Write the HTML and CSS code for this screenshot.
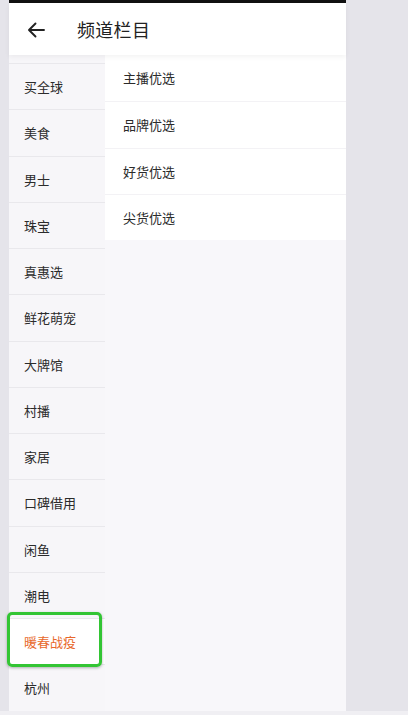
FILE: index.html
```html
<!DOCTYPE html>
<html lang="zh-CN">
<head>
<meta charset="utf-8">
<title>频道栏目</title>
<link rel="stylesheet" href="styles.css">
</head>
<body>
<div class="phone">
  <div class="statusbar"></div>
  <header class="header">
    <svg class="back" width="18" height="16" viewBox="0 0 18 16" aria-hidden="true">
      <path d="M17 8H2.5M8.5 1.5L2 8l6.5 6.5" fill="none" stroke="#222" stroke-width="1.9" stroke-linecap="round" stroke-linejoin="round"/>
    </svg>
    <h1 class="title">频道栏目</h1>
  </header>
  <div class="main">
    <ul class="sidebar">
      <li class="side-item">买全球</li>
      <li class="side-item">美食</li>
      <li class="side-item">男士</li>
      <li class="side-item">珠宝</li>
      <li class="side-item">真惠选</li>
      <li class="side-item">鲜花萌宠</li>
      <li class="side-item">大牌馆</li>
      <li class="side-item">村播</li>
      <li class="side-item">家居</li>
      <li class="side-item">口碑借用</li>
      <li class="side-item">闲鱼</li>
      <li class="side-item">潮电</li>
      <li class="side-item active">暖春战疫<span class="highlight"></span></li>
      <li class="side-item">杭州</li>
    </ul>
    <ul class="content">
      <li class="content-item">主播优选</li>
      <li class="content-item">品牌优选</li>
      <li class="content-item">好货优选</li>
      <li class="content-item">尖货优选</li>
    </ul>
  </div>
</div>
<div class="bottom-strip"></div>
</body>
</html>
```

FILE: styles.css
```css
* { box-sizing: border-box; }
html, body {
  margin: 0;
  padding: 0;
  background: #e5e4ea;
  font-family: "Noto Sans CJK SC", "Noto Sans", sans-serif;
  overflow: hidden;
}
.phone {
  width: 337px;
  height: 711px;
  margin-left: 9px;
  background: #f8f7fa;
  display: flex;
  flex-direction: column;
}
.statusbar {
  height: 3px;
  background: #111;
  flex: none;
}
.header {
  height: 52px;
  flex: none;
  background: #fff;
  display: flex;
  align-items: center;
  padding-left: 18px;
  box-shadow: 0 2px 5px rgba(0, 0, 0, 0.05);
  position: relative;
  z-index: 2;
}
.back { display: block; margin-top: 1px; }
.title {
  margin: 0 0 0 32px;
  font-size: 18px;
  font-weight: 400;
  color: #222;
  letter-spacing: 0.3px;
}
.main {
  flex: 1;
  display: flex;
  min-height: 0;
}
.sidebar {
  list-style: none;
  margin: 0;
  padding: 8px 0 0;
  width: 96px;
  flex: none;
  background: #f7f6f9;
}
.side-item {
  position: relative;
  height: 46.25px;
  border-top: 1px solid #e9e8ec;
  padding-left: 15px;
  display: flex;
  align-items: center;
  font-size: 13px;
  color: #2b2b2b;
}
.side-item.active {
  background: #fff;
  color: #e8692c;
  z-index: 1;
}
.highlight {
  position: absolute;
  left: -2px;
  right: 3px;
  top: -7px;
  height: 55px;
  border: 3px solid #33c534;
  border-radius: 5px;
  box-shadow: 0 1px 3px rgba(0, 0, 0, 0.3);
}
.content {
  list-style: none;
  margin: 0;
  padding: 0;
  flex: 1;
  align-self: flex-start;
  background: #fff;
}
.content-item {
  height: 46.25px;
  padding-left: 18px;
  display: flex;
  align-items: center;
  font-size: 13px;
  color: #2b2b2b;
  border-top: 1px solid #f3f2f5;
}
.content-item:first-child { border-top: 0; padding-bottom: 1px; }
.bottom-strip {
  height: 4px;
  background: #f0eff3;
}
```
